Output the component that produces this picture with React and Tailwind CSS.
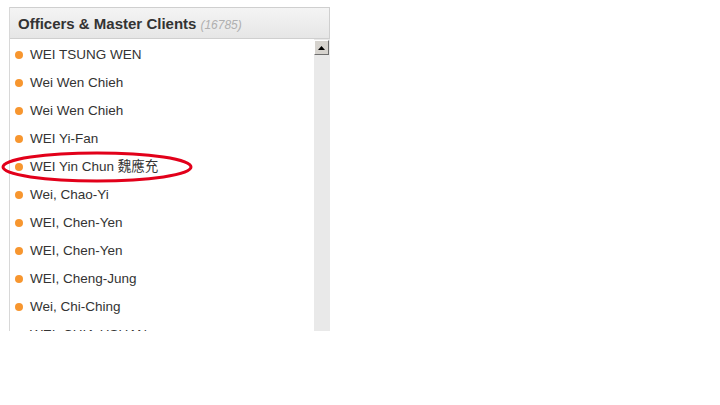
const names = [
  'WEI TSUNG WEN',
  'Wei Wen Chieh',
  'Wei Wen Chieh',
  'WEI Yi-Fan',
  'WEI Yin Chun 魏應充',
  'Wei, Chao-Yi',
  'WEI, Chen-Yen',
  'WEI, Chen-Yen',
  'WEI, Cheng-Jung',
  'Wei, Chi-Ching',
  'WEI, CHIA-HSUAN',
];

export default function App() {
  return (
    <div
      className="relative w-[720px] h-[405px] bg-white overflow-hidden"
      style={{ fontFamily: '"Liberation Sans", Arial, "Noto Sans CJK TC", sans-serif' }}
    >
      <div className="absolute left-[9px] top-[7px] w-[321px] h-[324px] flex flex-col border-l border-[#d8d8d8] overflow-hidden">
        {/* Header */}
        <div className="h-[32px] shrink-0 flex items-end pb-[7px] pl-[8px] bg-gradient-to-b from-[#f4f4f4] to-[#e6e6e6] border-t border-r border-b border-[#cfcfcf]">
          <span className="text-[15px] font-bold text-[#333] leading-none">Officers &amp; Master Clients</span>
          <span className="ml-[4px] text-[12px] italic text-[#b0b0b0] leading-none">(16785)</span>
        </div>
        {/* List + scrollbar */}
        <div className="flex flex-1 min-h-0">
          <div className="flex-1 pt-[2px] overflow-hidden">
            {names.map((n, i) => (
              <div key={i} className="h-[28px] flex items-center pl-[5px] shrink-0">
                <span className="w-[8px] h-[8px] rounded-full bg-[#f7962f] mr-[7px]" />
                <span className="text-[13.5px] text-[#333]">{n}</span>
              </div>
            ))}
          </div>
          <div className="w-[16px] bg-[#e9e9e9] flex flex-col pt-[1px]">
            <div className="w-[15px] h-[15px] bg-[#d6d3ce] border border-t-white border-l-white border-r-[#6e6e6e] border-b-[#6e6e6e] flex items-center justify-center">
              <svg width="7" height="4" viewBox="0 0 7 4">
                <path d="M3.5 0 L7 4 L0 4 Z" fill="#000" />
              </svg>
            </div>
          </div>
        </div>
      </div>
      {/* Red highlight ellipse */}
      <svg className="absolute left-0 top-0" width="720" height="405">
        <ellipse cx="97" cy="167" rx="94" ry="14" fill="none" stroke="#e2001a" strokeWidth="3" />
      </svg>
    </div>
  );
}
